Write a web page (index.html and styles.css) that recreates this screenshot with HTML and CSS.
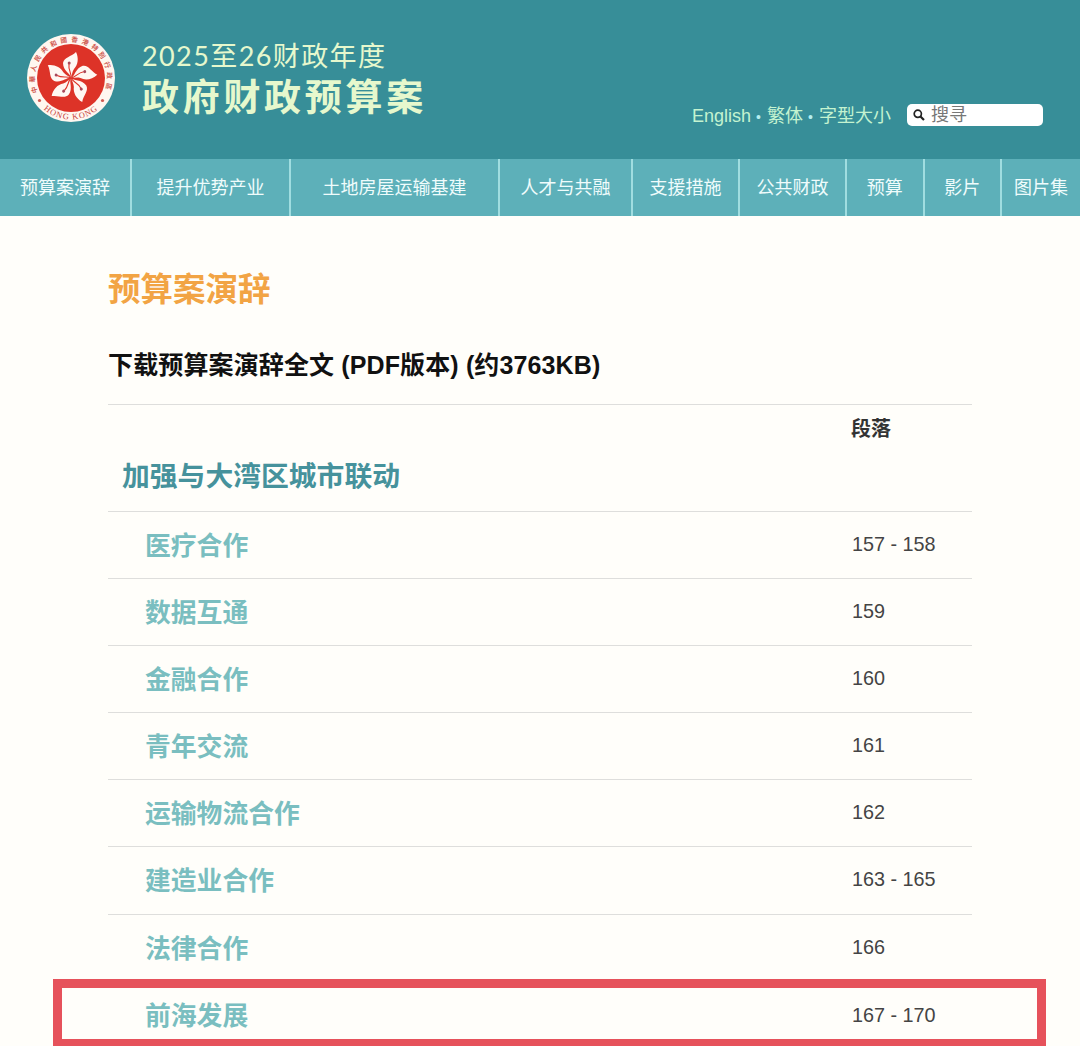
FILE: index.html
```
<!DOCTYPE html>
<html lang="zh-CN">
<head>
    <meta charset="UTF-8">
    <meta name="viewport" content="width=device-width, initial-scale=1.0">
    <title>预算案演辞</title>
    <link rel="stylesheet" href="styles.css">
</head>
<body>
    <header class="header">
        <svg class="emblem" viewBox="-45 -45 90 90">
            <defs>
                <path id="ringTop" d="M-29.5,21 A36.2,36.2 0 1 1 29.5,21"/>
                <path id="ringBottom" d="M-31,27.5 A41.4,41.4 0 0 0 31,27.5"/>
                <g id="petal">
                    <path d="M0,0 C0,-4 -8,-7 -8,-15 C-7,-21 0,-21 5,-26 C8,-20 7,-13 3,-9 C1,-6 1,-3 0,0Z" fill="#fff7f2"/>
                    <path d="M0,0 C1,-4 -3,-8 -2,-14" fill="none" stroke="#dd3328" stroke-width="1.1"/>
                    <circle cx="-1.8" cy="-15" r="1.5" fill="#a8485a"/>
                </g>
            </defs>
            <circle r="44" fill="#fff7f0"/>
            <circle r="34" fill="#dd3328"/>
            <use href="#petal"/>
            <use href="#petal" transform="rotate(72)"/>
            <use href="#petal" transform="rotate(144)"/>
            <use href="#petal" transform="rotate(216)"/>
            <use href="#petal" transform="rotate(288)"/>
            <text class="ring-cn"><textPath href="#ringTop" startOffset="50%" text-anchor="middle">中華人民共和國香港特別行政區</textPath></text>
            <text class="ring-en"><textPath href="#ringBottom" startOffset="50%" text-anchor="middle">HONG KONG</textPath></text>
            <circle cx="-31.5" cy="22.5" r="1.6" fill="#cf5a52"/>
            <circle cx="31.5" cy="22.5" r="1.6" fill="#cf5a52"/>
        </svg>
        <div class="title">
            <div class="title-year">2025至26财政年度</div>
            <div class="title-name">政府财政预算案</div>
        </div>
        <div class="tools">
            <div class="tool-links">
                <a>English</a> <span>•</span> <a>繁体</a> <span>•</span> <a>字型大小</a>
            </div>
            <div class="search">
                <svg width="14" height="14" viewBox="0 0 14 14">
                    <circle cx="5.8" cy="5.8" r="3.6" fill="none" stroke="#222" stroke-width="1.7"/>
                    <path d="M8.5,8.5 L12,12" stroke="#222" stroke-width="2.2"/>
                </svg>
                <span>搜寻</span>
            </div>
        </div>
    </header>

    <nav class="nav">
        <a class="w-speech">预算案演辞</a>
        <a class="w-industry">提升优势产业</a>
        <a class="w-land">土地房屋运输基建</a>
        <a class="w-talent">人才与共融</a>
        <a class="w-four">支援措施</a>
        <a class="w-four">公共财政</a>
        <a class="w-two">预算</a>
        <a class="w-two">影片</a>
        <a class="w-last">图片集</a>
    </nav>

    <main class="content">
        <h1>预算案演辞</h1>
        <h2>下载预算案演辞全文 (PDF版本) (约3763KB)</h2>
        <div class="list">
            <div class="list-head">
                <div class="para-label">段落</div>
                <h3>加强与大湾区城市联动</h3>
            </div>
            <div class="row"><a>医疗合作</a><span>157 - 158</span></div>
            <div class="row"><a>数据互通</a><span>159</span></div>
            <div class="row"><a>金融合作</a><span>160</span></div>
            <div class="row"><a>青年交流</a><span>161</span></div>
            <div class="row"><a>运输物流合作</a><span>162</span></div>
            <div class="row"><a>建造业合作</a><span>163 - 165</span></div>
            <div class="row"><a>法律合作</a><span>166</span></div>
            <div class="row marked"><a>前海发展</a><span>167 - 170</span></div>
        </div>
    </main>
</body>
</html>
```
FILE: styles.css
```
* {
    box-sizing: border-box;
}
body {
    margin: 0;
    height: 1046px;
    overflow: hidden;
    background-color: #fffefa;
    font-family: "Liberation Sans", "Noto Sans CJK SC", sans-serif;
    color: #444;
}
.header {
    display: flex;
    height: 159px;
    padding-left: 26px;
    background-color: #378e98;
}
.emblem {
    width: 90px;
    height: 90px;
    margin-top: 33px;
}
.ring-cn {
    font-family: "Noto Sans CJK TC", sans-serif;
    font-size: 6.6px;
    font-weight: bold;
    letter-spacing: 3.6px;
    fill: #cf5a52;
}
.ring-en {
    font-family: "Liberation Serif", serif;
    font-size: 8.4px;
    letter-spacing: 1px;
    fill: #c9463f;
}
.title {
    margin: 38px 0 0 26px;
    white-space: nowrap;
    color: #e6f8cd;
}
.title-year {
    font-family: Lato, "Noto Sans CJK SC", sans-serif;
    font-weight: 400;
    font-size: 27px;
    line-height: 36px;
    letter-spacing: 1.4px;
}
.title-name {
    font-size: 37px;
    font-weight: bold;
    line-height: 50px;
    letter-spacing: 3.7px;
}
.tools {
    display: flex;
    align-items: center;
    height: 24px;
    margin: 103px 37px 0 auto;
    white-space: nowrap;
}
.tool-links {
    margin-top: -2px;
    font-size: 18px;
    color: #c4f3d0;
}
.tool-links span {
    display: inline-block;
    font-size: 14px;
    width: 6px;
    color: #b5eef0;
}
.search {
    display: flex;
    align-items: center;
    width: 136px;
    height: 22px;
    margin-left: 16px;
    padding-left: 5px;
    border-radius: 5px;
    background: #fff;
    font-size: 18px;
    line-height: 24px;
    color: #777;
}
.search span {
    margin-left: 5px;
}
.nav {
    display: flex;
    height: 57px;
    background-color: #5db0b9;
}
.nav a {
    flex: none;
    border-right: 2px solid #a0dde0;
    font-size: 18px;
    line-height: 58px;
    text-align: center;
    white-space: nowrap;
    color: #effcfc;
}
.nav .w-speech {
    width: 132px;
}
.nav .w-industry {
    width: 159px;
}
.nav .w-land {
    width: 209px;
}
.nav .w-talent {
    width: 133px;
}
.nav .w-four {
    width: 107px;
}
.nav .w-two {
    width: 77.5px;
}
.nav .w-last {
    width: 78px;
    border-right: none;
}
.content {
    width: 864px;
    margin-left: 108px;
    padding-top: 50px;
}
h1, h2, h3 {
    margin: 0;
    white-space: nowrap;
}
h1 {
    font-size: 32.5px;
    line-height: 48px;
    color: #f2a444;
}
h2 {
    margin-top: 30px;
    font-size: 25px;
    line-height: 42px;
    letter-spacing: 0.13px;
    color: #111;
}
.list {
    margin-top: 18px;
    border-top: 1px solid #dededc;
}
.list-head {
    height: 106px;
    padding-top: 8px;
}
.para-label {
    padding-left: 743px;
    font-size: 20px;
    font-weight: bold;
    line-height: 32px;
    color: #333;
}
h3 {
    margin-top: 10px;
    padding-left: 14px;
    font-size: 27.8px;
    line-height: 44px;
    color: #46929c;
}
.row {
    display: flex;
    height: 67.1px;
    border-top: 1px solid #dededc;
    line-height: 65px;
}
.row a {
    width: 744px;
    padding: 2px 0 0 37px;
    font-size: 25.8px;
    font-weight: bold;
    color: #7abec0;
}
.row span {
    font-size: 19.8px;
}
/* frame around the highlighted row */
.row.marked {
    width: 993px;
    height: 69px;
    margin: -2px 0 0 -55px;
    border: 9px solid #e6525b;
    line-height: 54px;
}
.row.marked a {
    width: 790px;
    padding: 1px 0 0 83px;
}
```
